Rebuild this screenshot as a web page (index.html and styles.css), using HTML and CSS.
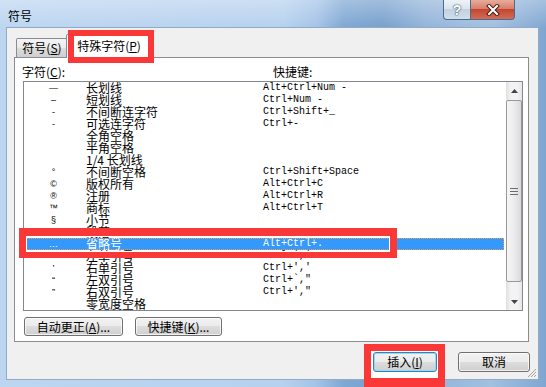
FILE: index.html
```html
<!DOCTYPE html>
<html lang="zh-CN">
<head>
    <meta charset="UTF-8">
    <title>符号</title>
    <link rel="stylesheet" href="styles.css">
</head>
<body>
<div class="window">
    <div class="titlebar">
        <span class="title">符号</span>
        <div class="caption-buttons">
            <span class="cap-btn help">?</span>
            <span class="cap-btn close">
                <svg width="14" height="12" viewBox="0 0 14 12">
                    <path d="M3 2 L11 10 M11 2 L3 10" stroke="#4a1c14" stroke-width="4" stroke-linecap="square"/>
                    <path d="M3 2 L11 10 M11 2 L3 10" stroke="#fff" stroke-width="2" stroke-linecap="square"/>
                </svg>
            </span>
        </div>
    </div>

    <div class="client">
        <!-- Registerkarten -->
        <div class="tabs">
            <div class="tab">符号(<u>S</u>)</div>
            <div class="tab active">特殊字符(<u>P</u>)</div>
        </div>

        <div class="panel">
            <div class="label-row">
                <span>字符(<u>C</u>):</span>
                <span>快捷键:</span>
            </div>

            <div class="listbox">
                <div class="rows">
                    <div class="row"><span class="sym">—</span><span>长划线</span><span class="key">Alt+Ctrl+Num -</span></div>
                    <div class="row"><span class="sym">–</span><span>短划线</span><span class="key">Ctrl+Num -</span></div>
                    <div class="row"><span class="sym">-</span><span>不间断连字符</span><span class="key">Ctrl+Shift+_</span></div>
                    <div class="row"><span class="sym">-</span><span>可选连字符</span><span class="key">Ctrl+-</span></div>
                    <div class="row"><span class="sym"></span><span>全角空格</span><span class="key"></span></div>
                    <div class="row"><span class="sym"></span><span>半角空格</span><span class="key"></span></div>
                    <div class="row"><span class="sym"></span><span>1/4 长划线</span><span class="key"></span></div>
                    <div class="row"><span class="sym">°</span><span>不间断空格</span><span class="key">Ctrl+Shift+Space</span></div>
                    <div class="row"><span class="sym">©</span><span>版权所有</span><span class="key">Alt+Ctrl+C</span></div>
                    <div class="row"><span class="sym">®</span><span>注册</span><span class="key">Alt+Ctrl+R</span></div>
                    <div class="row"><span class="sym">™</span><span>商标</span><span class="key">Alt+Ctrl+T</span></div>
                    <div class="row"><span class="sym">§</span><span>小节</span><span class="key"></span></div>
                    <div class="row"><span class="sym">¶</span><span>段落</span><span class="key"></span></div>
                    <div class="row selected"><span class="sym">…</span><span>省略号</span><span class="key">Alt+Ctrl+.</span></div>
                    <div class="row"><span class="sym">‘</span><span>左单引号</span><span class="key">Ctrl+`,`</span></div>
                    <div class="row"><span class="sym">’</span><span>右单引号</span><span class="key">Ctrl+','</span></div>
                    <div class="row"><span class="sym">“</span><span>左双引号</span><span class="key">Ctrl+`,"</span></div>
                    <div class="row"><span class="sym">”</span><span>右双引号</span><span class="key">Ctrl+',"</span></div>
                    <div class="row"><span class="sym"></span><span>零宽度空格</span><span class="key"></span></div>
                </div>
                <div class="scrollbar">
                    <div class="sb-arrow">
                        <svg width="7" height="4" viewBox="0 0 7 4"><path d="M0 4 L3.5 0 L7 4 Z" fill="#444"/></svg>
                    </div>
                    <div class="sb-thumb">
                        <svg width="8" height="7" viewBox="0 0 8 7">
                            <path d="M0 0.5 H8 M0 3.5 H8 M0 6.5 H8" stroke="#6d6d6d" stroke-width="1"/>
                        </svg>
                    </div>
                    <div class="sb-track"></div>
                    <div class="sb-arrow">
                        <svg width="7" height="4" viewBox="0 0 7 4"><path d="M0 0 L7 0 L3.5 4 Z" fill="#444"/></svg>
                    </div>
                </div>
            </div>

            <div class="panel-buttons">
                <button class="btn btn-auto">自动更正(<u>A</u>)...</button>
                <button class="btn btn-keys">快捷键(<u>K</u>)...</button>
            </div>
        </div>

        <div class="dialog-buttons">
            <button class="btn btn-insert">插入(<u>I</u>)</button>
            <button class="btn btn-cancel">取消</button>
        </div>

        <svg class="grip" width="10" height="10" viewBox="0 0 10 10">
            <path d="M9 1 L1 9 M9 4 L4 9 M9 7 L7 9" stroke="#a3a3a3" stroke-width="1"/>
        </svg>
    </div>

    <!-- Markierungen -->
    <div class="mark mark-tab"></div>
    <div class="mark mark-row"></div>
    <div class="mark mark-insert"></div>
</div>
</body>
</html>
```

FILE: styles.css
```css
body {
    margin: 0;
    font-family: "Noto Sans CJK SC", "Liberation Sans", sans-serif;
    font-size: 12px;
    color: #000;
    background: #fff;
}
.window {
    position: relative;
    width: 546px;
    height: 387px;
    overflow: hidden;
    background:
        linear-gradient(180deg, rgba(255, 255, 255, 0.3), rgba(255, 255, 255, 0) 28px),
        linear-gradient(90deg, #bcd6f1 0%, #b6d1ee 52%, #a3c3e6 58%, #7ea7d3 63%, #77a0cd 70%, #92b4d9 78%, #a2c0e0 90%, #7fa6d1 100%);
}
.titlebar {
    display: flex;
    align-items: flex-start;
    height: 28px;
}
.title {
    margin: 9px 0 0 8px;
    line-height: 14px;
}
.caption-buttons {
    display: flex;
    margin-left: auto;
    margin-right: 31px;
}
.cap-btn {
    box-sizing: border-box;
    height: 20px;
    display: flex;
    align-items: center;
    justify-content: center;
    border: 1px solid #4e6b8c;
    border-top: none;
}
.help {
    width: 27px;
    border-right: none;
    border-radius: 0 0 0 4px;
    background: linear-gradient(#eef3f9, #dbe4ee 45%, #c3d1e1 50%, #d3deea);
    color: #fff;
    font: bold 14px "Liberation Sans", sans-serif;
    text-shadow: 0 0 1px #2b4563, 0 0 2px #2b4563;
}
.close {
    width: 45px;
    border-radius: 0 0 4px 0;
    background: linear-gradient(#e8ab9d, #d8806c 45%, #c3472f 50%, #d26d57);
}
.client {
    position: relative;
    margin: 0 8px 0 7px;
    height: 351px;
    background: #f0f0f0;
    box-shadow: 0 0 0 1px #93aac4;
}
.tabs {
    display: flex;
    align-items: flex-end;
    height: 29px;
    padding-left: 9px;
}
.tab {
    box-sizing: border-box;
    width: 52px;
    height: 19px;
    border: 1px solid #898c95;
    border-bottom: none;
    border-radius: 2px 2px 0 0;
    background: linear-gradient(#f3f3f3, #ebebeb 50%, #dddddd 50%, #cfcfcf);
    text-align: center;
    line-height: 17px;
}
.tab.active {
    position: relative;
    z-index: 1;
    width: 86px;
    height: 24px;
    margin-left: -2px;
    margin-bottom: -1px;
    background: #fff;
    line-height: 22px;
}
.panel {
    box-sizing: border-box;
    width: 515px;
    height: 285px;
    margin-left: 7px;
    border: 1px solid #898c95;
    background: #fff;
}
.label-row {
    display: grid;
    grid-template-columns: 251px auto;
    padding: 6px 0 0 7px;
    line-height: 16px;
}
.listbox {
    box-sizing: border-box;
    display: flex;
    width: 500px;
    height: 230px;
    margin: 1px 0 0 8px;
    border: 1px solid #828790;
}
.rows {
    flex: 1;
}
.row {
    display: grid;
    grid-template-columns: 62px 177px 1fr;
    height: 12px;
    line-height: 12px;
    margin-right: 2px;
    white-space: nowrap;
}
.sym {
    padding-right: 3px;
    text-align: center;
    font: 9px/12px "Liberation Sans", sans-serif;
}
.key {
    font: 10px/12px "Liberation Mono", monospace;
}
.row.selected {
    background: #3399ff;
    color: #fff;
    outline: 1px dotted #e39a4a;
    outline-offset: -1px;
}
.scrollbar {
    display: flex;
    flex-direction: column;
    width: 16px;
    background: linear-gradient(90deg, #e0e0e0, #f3f3f3 30%, #f3f3f3 70%, #e6e6e6);
}
.sb-arrow {
    display: flex;
    align-items: center;
    justify-content: center;
    height: 17px;
}
.sb-thumb {
    box-sizing: border-box;
    display: flex;
    align-items: center;
    justify-content: center;
    height: 182px;
    margin: 1px 0 0 0;
    border: 1px solid #989898;
    border-radius: 2px;
    background: linear-gradient(90deg, #f6f6f6, #ececec 50%, #d9d9d9);
}
.sb-track {
    flex: 1;
}
.panel-buttons {
    display: flex;
    gap: 12px;
    margin: 6px 0 0 9px;
}
.btn {
    box-sizing: border-box;
    height: 19px;
    padding: 0;
    border: 1px solid #707070;
    border-radius: 3px;
    background: linear-gradient(#f2f2f2, #ebebeb 50%, #dddddd 50%, #cfcfcf);
    box-shadow: inset 0 0 0 1px rgba(255, 255, 255, 0.7);
    font: 12px/16px "Noto Sans CJK SC", sans-serif;
    color: #000;
}
.btn-auto {
    width: 99px;
}
.btn-keys {
    width: 87px;
}
.dialog-buttons {
    display: flex;
    justify-content: flex-end;
    gap: 21px;
    margin-top: 10px;
    padding-right: 8px;
}
.btn-insert {
    position: relative;
    z-index: 2;
    width: 64px;
    height: 20px;
    border-color: #3c7fb1;
    box-shadow: inset 0 0 0 1px #8fdcf8;
}
.btn-cancel {
    width: 72px;
    height: 20px;
}
.grip {
    position: absolute;
    right: 1px;
    bottom: 1px;
}
.mark {
    position: absolute;
    z-index: 3;
    box-sizing: border-box;
    border: 6px solid #fb3838;
}
.mark-tab {
    left: 68px;
    top: 30px;
    width: 86px;
    height: 33px;
}
.mark-row {
    left: 19px;
    top: 228px;
    width: 378px;
    height: 30px;
    border-width: 8px 7px 6px 7px;
    box-shadow: inset 0 0 0 1px #fff;
}
.mark-insert {
    z-index: 1;
    left: 364px;
    top: 344px;
    width: 81px;
    height: 43px;
    border-width: 7px 7px 9px 7px;
    background: #fff;
}
```
